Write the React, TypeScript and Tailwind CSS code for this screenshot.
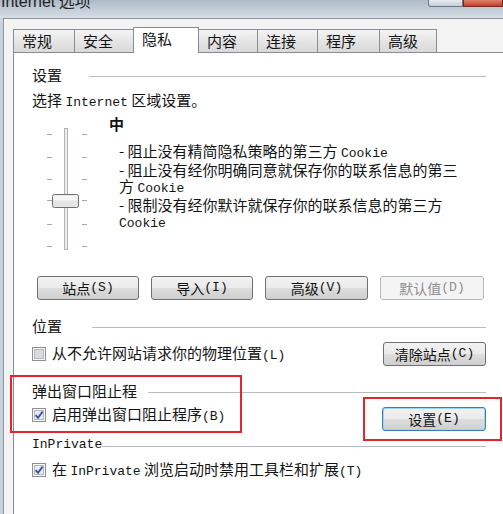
import type { ReactNode } from 'react'

// Latin runs in the dialog use a narrow monospace face, like the original bitmap font
function L({ children }: { children: ReactNode }) {
    return <span className="font-['Liberation_Mono',monospace] text-[13px]">{children}</span>
}

function CheckBox({ checked }: { checked?: boolean }) {
    return (
        <svg width="14" height="14" viewBox="0 0 14 14" className="shrink-0">
            <rect x="0.5" y="0.5" width="13" height="13" fill="#f6f6f6" stroke="#8e8f8f" />
            <rect x="2.5" y="2.5" width="9" height="9" fill={checked ? '#e6ebf1' : '#d9dcdf'} stroke="#b4b8bd" />
            {checked && <path d="M3.6 7.2 L6 9.8 L10.6 3.6" stroke="#3d55a0" strokeWidth="1.9" fill="none" />}
        </svg>
    )
}

function Btn({ children, w, disabled, isDefault }: { children: ReactNode; w: string; disabled?: boolean; isDefault?: boolean }) {
    let look = 'border-[#707070] bg-[linear-gradient(#f2f2f2_0%,#ebebeb_48%,#dddddd_52%,#cfcfcf_100%)] text-[#111]'
    if (disabled) look = 'border-[#b5b9bc] bg-[#f4f4f4] text-[#8f8f8f]'
    if (isDefault) look = 'border-[#3c7fb1] bg-[linear-gradient(#f2f2f2_0%,#ebebeb_48%,#dddddd_52%,#cfcfcf_100%)] text-[#111] shadow-[inset_0_0_0_1px_#9fd3f2]'
    return (
        <div className={`${w} h-[24px] shrink-0 rounded-[3px] border flex items-center justify-center text-[14px] leading-[16px] ${look}`}>
            {children}
        </div>
    )
}

function GroupHeader({ label, gap, lineOffset }: { label: ReactNode; gap: string; lineOffset: string }) {
    return (
        <div className="flex items-center h-[16px] leading-[16px]">
            <span className="whitespace-nowrap">{label}</span>
            <div className={`flex-1 h-px bg-[#b7bcc1] ${gap} ${lineOffset}`} />
        </div>
    )
}

function Slider() {
    const ticks = [8, 31, 53, 74, 98, 120]
    return (
        <svg width="46" height="126" viewBox="0 0 46 126" className="shrink-0">
            <rect x="19.5" y="2.5" width="3" height="121" fill="#eceeee" stroke="#b3b3b3" />
            {ticks.map((y) => (
                <g key={y} stroke="#a8a8a8">
                    <line x1="2" y1={y + 0.5} x2="7" y2={y + 0.5} />
                    <line x1="37" y1={y + 0.5} x2="42" y2={y + 0.5} />
                </g>
            ))}
            <rect x="7.5" y="68.5" width="26" height="13" rx="2" fill="#e4e4e4" stroke="#6f6f6f" />
            <rect x="8.5" y="69.5" width="24" height="5" rx="1" fill="#f6f6f6" />
        </svg>
    )
}

const tabs = [
    { t: '常规', w: 'w-[62px]' },
    { t: '安全', w: 'w-[60px]' },
    { t: '隐私', w: 'w-[66px]', active: true },
    { t: '内容', w: 'w-[60px]' },
    { t: '连接', w: 'w-[61px]' },
    { t: '程序', w: 'w-[63px]' },
    { t: '高级', w: 'w-[58px]' },
]

export default function App() {
    return (
        <div className="relative w-[503px] h-[514px] overflow-hidden flex flex-col bg-[#c9d3dc] text-[15px] text-[#141414] font-['Noto_Sans_CJK_SC',sans-serif]">
            {/* title bar, mostly scrolled off the top */}
            <div className="h-[18px] shrink-0 flex items-start bg-[linear-gradient(#aebbc8,#d6dee6)] overflow-hidden">
                <div className="-mt-[12px] pl-[1px] whitespace-nowrap text-[16px] text-[#222]">
                    <span className="font-['Liberation_Sans',sans-serif]">Internet</span> 选项
                </div>
                <div className="ml-auto flex">
                    <div className="w-[35px] h-[7px] rounded-bl-[3px] border border-t-0 border-[#6b7886] bg-[linear-gradient(#e6ebf0,#c4cdd6)]" />
                    <div className="w-[40px] h-[7px] border border-t-0 border-[#7a2a20] bg-[linear-gradient(#e0806a,#c2402c)]" />
                </div>
            </div>

            <div className="flex-1 ml-[3px] border-l border-t border-[#8c97a2] bg-[#f3f3f3] pl-[9px] flex flex-col">
                {/* tab strip */}
                <div className="h-[33px] flex items-end">
                    {tabs.map((tab, i) => (
                        <div
                            key={tab.t}
                            className={`${tab.w} ${i > 0 ? '-ml-px' : ''} border border-b-0 border-[#898c95] pl-[8px] leading-[16px] ${
                                tab.active
                                    ? 'relative z-10 h-[26px] -mb-px bg-white pt-[3px]'
                                    : 'h-[23px] flex items-center bg-[linear-gradient(#f5f5f5,#e4e4e4_55%,#d9d9d9)]'
                            }`}
                        >
                            {tab.t}
                        </div>
                    ))}
                </div>

                {/* privacy page */}
                <div className="flex-1 border-l border-t border-[#898c95] bg-white pl-[18px] pr-[17px] pt-[14px] flex flex-col">
                    <GroupHeader label="设置" gap="ml-[27px]" lineOffset="mt-[3px]" />
                    <div className="mt-[9px] h-[16px] leading-[16px] whitespace-nowrap">
                        选择 <L>Internet</L> 区域设置。
                    </div>

                    <div className="mt-[8px] flex">
                        <div className="ml-[13px] mt-[10px]">
                            <Slider />
                        </div>
                        <div className="ml-[18px] flex flex-col">
                            <div className="h-[16px] leading-[16px] font-bold">中</div>
                            <div className="mt-[11px] pl-[10px] leading-[16px] whitespace-nowrap">
                                <div>- 阻止没有精简隐私策略的第三方 <L>Cookie</L></div>
                                <div>- 阻止没有经你明确同意就保存你的联系信息的第三</div>
                                <div>方 <L>Cookie</L></div>
                                <div>- 限制没有经你默许就保存你的联系信息的第三方</div>
                                <div><L>Cookie</L></div>
                            </div>
                        </div>
                    </div>

                    <div className="mt-[24px] ml-[5px] flex gap-[12px]">
                        <Btn w="w-[102px]">站点<L>(S)</L></Btn>
                        <Btn w="w-[102px]">导入<L>(I)</L></Btn>
                        <Btn w="w-[103px]">高级<L>(V)</L></Btn>
                        <Btn w="w-[104px]" disabled>默认值<L>(D)</L></Btn>
                    </div>

                    <div className="mt-[18px]">
                        <GroupHeader label="位置" gap="ml-[30px]" lineOffset="mt-[3px]" />
                    </div>
                    <div className="mt-[8px] flex items-center justify-between">
                        <div className="flex items-center gap-[6px] leading-[16px] whitespace-nowrap">
                            <CheckBox />
                            <span>从不允许网站请求你的物理位置<L>(L)</L></span>
                        </div>
                        <Btn w="w-[103px]">清除站点<L>(C)</L></Btn>
                    </div>

                    <div className="mt-[17px]">
                        <GroupHeader label="弹出窗口阻止程" gap="ml-[11px]" lineOffset="mt-[2px]" />
                    </div>
                    <div className="mt-[8px] flex items-start justify-between">
                        <div className="flex items-center gap-[6px] h-[16px] leading-[16px] whitespace-nowrap">
                            <CheckBox checked />
                            <span>启用弹出窗口阻止程序<L>(B)</L></span>
                        </div>
                        <Btn w="w-[104px]" isDefault>设置<L>(E)</L></Btn>
                    </div>

                    <div className="mt-[4px]">
                        <GroupHeader label={<L>InPrivate</L>} gap="ml-0" lineOffset="mt-[6px]" />
                    </div>
                    <div className="mt-[11px] flex items-center gap-[6px] h-[16px] leading-[16px] whitespace-nowrap">
                        <CheckBox checked />
                        <span>在 <L>InPrivate</L> 浏览启动时禁用工具栏和扩展<L>(T)</L></span>
                    </div>
                </div>
            </div>

            {/* red annotation boxes */}
            <div className="absolute left-[10px] top-[375px] w-[232px] h-[58px] border-2 border-[#e3262d]" />
            <div className="absolute left-[363px] top-[397px] w-[139px] h-[44px] border-2 border-[#e3262d]" />
        </div>
    )
}
